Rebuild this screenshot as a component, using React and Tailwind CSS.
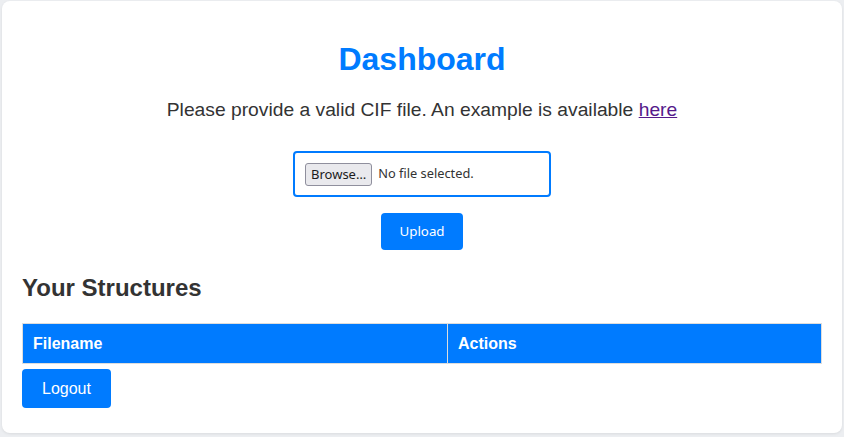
export default function App() {
  return (
    <div className="min-h-screen bg-[#eceef1] px-[2px] pt-[1px] font-['Liberation_Sans',Arial,sans-serif] text-[#333]">
      <div className="h-[432px] rounded-[8px] bg-white px-[20px] pt-[39px] shadow-[0_1px_3px_rgba(0,0,0,0.08)]">
        {/* Header */}
        <h1 className="text-center text-[32px] font-bold leading-[38px] text-[#007bff]">
          Dashboard
        </h1>
        <p className="mt-[17px] text-center text-[19.25px] leading-[29px]">
          Please provide a valid CIF file. An example is available{" "}
          <a href="#" className="text-[#551a8b] underline">
            here
          </a>
        </p>

        {/* Upload form */}
        <form
          onSubmit={(e) => e.preventDefault()}
          className="mt-[27px] flex flex-col items-center font-['Noto_Sans',sans-serif]"
        >
          <div className="flex h-[46px] w-[258px] items-center gap-[6px] rounded-[4px] border-2 border-[#007bff] px-[10px]">
            <button
              type="button"
              className="h-[23px] rounded-[3px] border border-[#8f8f9d] bg-[#e9e9ed] px-[5px] text-[13px] leading-[20px] text-[#1b1b1b]"
            >
              Browse…
            </button>
            <span className="text-[12.8px] text-[#333]">No file selected.</span>
          </div>
          <button
            type="submit"
            className="mt-[16px] h-[37px] w-[82px] rounded-[4px] bg-[#007bff] text-[13.33px] text-white"
          >
            Upload
          </button>
        </form>

        {/* Structures */}
        <h2 className="mt-[23px] text-[24px] font-bold leading-[29px]">
          Your Structures
        </h2>
        <table className="mt-[21px] w-full border-collapse">
          <thead>
            <tr className="bg-[#007bff] text-left text-[16px] font-bold text-white">
              <th className="w-[425px] border border-[#ddd] px-[10px] py-[10px] leading-[19px]">
                Filename
              </th>
              <th className="border border-[#ddd] px-[10px] py-[10px] leading-[19px]">
                Actions
              </th>
            </tr>
          </thead>
          <tbody></tbody>
        </table>
        <button className="mt-[5px] h-[39px] rounded-[4px] bg-[#007bff] px-[20px] text-[16px] text-white">
          Logout
        </button>
      </div>
    </div>
  );
}
